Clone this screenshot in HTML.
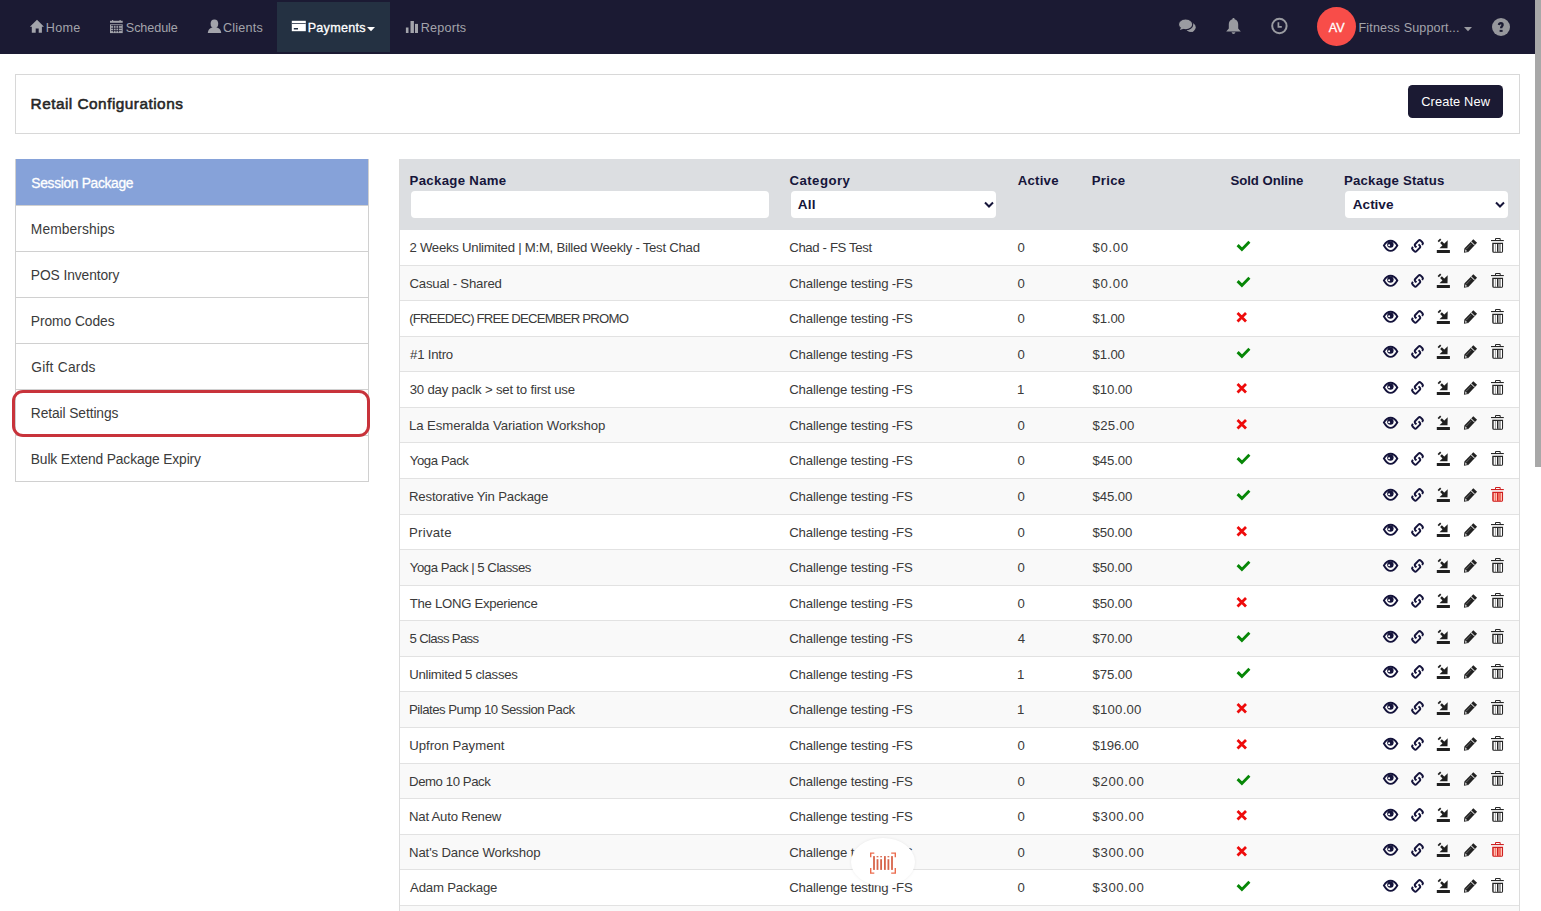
<!DOCTYPE html>
<html><head><meta charset="utf-8">
<style>
*{box-sizing:border-box;margin:0;padding:0}
html,body{width:1541px;height:911px;overflow:hidden;background:#fff;font-family:"Liberation Sans",sans-serif}
#nav{position:absolute;left:0;top:0;width:1535px;height:54px;background:#1b1a33}
#sb{position:absolute;left:1535px;top:0;width:6px;height:467px;background:#a8a8a8}
.nt{position:absolute;top:20.5px;color:#a3a4ab;font-size:12.6px;line-height:normal;white-space:nowrap}
#nav svg{position:absolute}
#act{position:absolute;left:277px;top:2px;width:113px;height:50px;background:#243142}
#hdr{position:absolute;left:15px;top:74px;width:1505px;height:60px;border:1px solid #d8d8d8}
#ttl{position:absolute;left:31px;top:95.4px;font-size:15px;font-weight:bold;color:#2b2b2b;white-space:nowrap}
#btn{position:absolute;left:1408px;top:85px;width:95px;height:33px;background:#1b1a33;border-radius:4.5px}
#btnt{position:absolute;left:1421px;top:94.4px;font-size:12.9px;color:#fff;white-space:nowrap}
#side{position:absolute;left:15px;top:159px;width:354px;border:1px solid #d0d0d0;border-top:none}
.si{height:46px;border-top:1px solid #d0d0d0;padding-left:15px;line-height:45px;font-size:13.4px;color:#3b3b3b;white-space:nowrap}
.si.on{background:#86a2d9;color:#fff;border-top-color:#86a2d9}
#ring{position:absolute;left:12px;top:390px;width:358px;height:47px;border:3px solid #c8333b;border-radius:11px}
#tbl{position:absolute;left:399px;top:159px;width:1121px;height:760px;border-left:1px solid #dcdcdc;border-right:1px solid #dcdcdc;overflow:hidden}
#th{position:absolute;left:0;top:0;width:100%;height:70.5px;background:#dcdee1}
.hl{position:absolute;top:13.5px;font-size:13.5px;font-weight:bold;color:#16153a;white-space:nowrap}
.inp{position:absolute;top:32px;height:27px;background:#fff;border-radius:4px}
.sel{font-size:14px;font-weight:bold;color:#16153a;line-height:27px;padding-left:7px}
.sel svg{position:absolute;top:10px}
.row{position:absolute;left:0;width:100%;height:35.564px;border-top:1px solid #e2e2e2;font-size:12.6px;color:#3a3a3a;white-space:nowrap}
.row.s{background:#f9f9f9}
.t{position:absolute;line-height:normal;white-space:nowrap}
.row.f{border-top-color:transparent}
.row svg{position:absolute;overflow:visible}
.row svg.ck{left:836px;top:11px}
.row svg.ac{left:980px;top:3.5px}
#fab{position:absolute;left:851px;top:838px;width:64px;height:48px;border-radius:50%;background:#fff;box-shadow:0 0 3px rgba(0,0,0,0.08)}
#fab svg{position:absolute;left:18px;top:14px}
</style></head>
<body>
<div id="nav">
  <div id="act"></div>
  <!-- home -->
  <svg style="left:29px;top:19px" width="16" height="15" viewBox="0 0 16 15"><path d="M8 0.8 L15 7.8 L12.9 7.8 L12.9 13.8 L9.7 13.8 L9.7 9.6 L6.7 9.6 L6.7 13.8 L2.8 13.8 L2.8 7.8 L0.9 7.8 Z" fill="#a3a4ab"/></svg>
  <!-- calendar -->
  <svg style="left:110px;top:20px" width="13" height="14" viewBox="0 0 13 14"><rect x="0" y="0.8" width="12.7" height="2" fill="#a3a4ab"/><rect x="2" y="0" width="1.2" height="1" fill="#a3a4ab"/><rect x="9.5" y="0" width="1.2" height="1" fill="#a3a4ab"/><rect x="0" y="4.3" width="12.7" height="8.8" fill="#a3a4ab"/><g fill="#1c1b33"><rect x="1" y="5.3" width="10.7" height="0.8"/><rect x="1" y="7.8" width="10.7" height="0.8"/><rect x="1" y="10.3" width="10.7" height="0.8"/><rect x="3" y="5.3" width="0.8" height="7"/><rect x="5.6" y="5.3" width="0.8" height="7"/><rect x="8.2" y="5.3" width="0.8" height="7"/></g></svg>
  <!-- user -->
  <svg style="left:207px;top:19px" width="15" height="15" viewBox="0 0 15 15"><ellipse cx="7.4" cy="4.8" rx="3.8" ry="4.4" fill="#a3a4ab"/><path d="M0.8 14 C1 10.5 3.5 9 5.2 8.6 L9.8 8.6 C11.5 9 14 10.5 14.2 14 Z" fill="#a3a4ab"/></svg>
  <!-- card -->
  <svg style="left:291px;top:20px" width="16" height="12" viewBox="0 0 16 12"><rect x="0.8" y="0.8" width="14" height="10.4" fill="#fff"/><rect x="0.8" y="3.1" width="14" height="0.9" fill="#3a4556"/><rect x="2.8" y="8" width="4.2" height="1.5" fill="#243142"/></svg>
  <svg style="left:366px;top:26px" width="10" height="6" viewBox="0 0 10 6"><path d="M1 1 L9 1 L5 5.2 Z" fill="#fff"/></svg>
  <!-- reports -->
  <svg style="left:405px;top:20px" width="14" height="14" viewBox="0 0 14 14"><rect x="0.9" y="7.5" width="2.6" height="5.5" fill="#a3a4ab"/><rect x="5.5" y="1" width="3.4" height="12" fill="#a3a4ab"/><rect x="10" y="3.9" width="3" height="9.1" fill="#a3a4ab"/></svg>
  <!-- chat -->
  <svg style="left:1178px;top:18px" width="19" height="16" viewBox="0 0 19 16"><ellipse cx="12.6" cy="9.3" rx="5.1" ry="4.5" fill="#9a9ba1"/><path d="M13.5 12.2 L15.8 14 L10.5 13.5 Z" fill="#9a9ba1"/><ellipse cx="7.6" cy="6.4" rx="7.1" ry="5.4" fill="#9a9ba1" stroke="#1c1b33" stroke-width="1.1"/><path d="M3 9.6 L1.9 12 L6.4 10.6 Z" fill="#9a9ba1"/></svg>
  <!-- bell -->
  <svg style="left:1225px;top:17px" width="17" height="18" viewBox="0 0 17 18"><path d="M8.5 1 C9.3 1 9.6 1.6 9.6 2.2 C12.2 2.8 13.2 5 13.2 7.5 L13.2 11.5 L15.8 14.6 L1.2 14.6 L3.8 11.5 L3.8 7.5 C3.8 5 4.8 2.8 7.4 2.2 C7.4 1.6 7.7 1 8.5 1 Z" fill="#9a9ba1"/><path d="M6.6 15.3 L10.4 15.3 C10.2 16.5 9.4 17 8.5 17 C7.6 17 6.8 16.5 6.6 15.3 Z" fill="#9a9ba1"/></svg>
  <!-- clock -->
  <svg style="left:1270px;top:17px" width="19" height="18" viewBox="0 0 19 18"><circle cx="9.4" cy="9" r="7.2" fill="none" stroke="#9a9ba1" stroke-width="2"/><path d="M8.4 5.2 V9.9 H11.8" fill="none" stroke="#9a9ba1" stroke-width="1.7"/></svg>
  <!-- avatar -->
  <div style="position:absolute;left:1317px;top:7px;width:39px;height:39px;border-radius:50%;background:#f84d49"></div>
  <svg style="left:1463px;top:26px" width="10" height="7" viewBox="0 0 10 7"><path d="M1 1 L9 1 L5 5.2 Z" fill="#9a9ba1"/></svg>
  <!-- help -->
  <svg style="left:1491px;top:17px" width="20" height="20" viewBox="0 0 20 20"><circle cx="10" cy="10" r="9" fill="#96979c"/><path d="M7.9 8.0 C8.1 6.7 8.9 6.2 9.9 6.2 C11 6.2 11.6 6.9 11.6 7.9 C11.6 9.2 10.1 9.5 10.1 11.3" fill="none" stroke="#1b1b32" stroke-width="2.3"/><rect x="8.6" y="12.9" width="3" height="2" fill="#1b1b32"/></svg>
</div>
<div id="sb"></div>
<div id="hdr"></div>
<div id="btn"></div>
<div id="side">
  <div class="si on"></div>
  <div class="si"></div>
  <div class="si"></div>
  <div class="si"></div>
  <div class="si"></div>
  <div class="si"></div>
  <div class="si"></div>
</div>
<div id="ring"></div>
<div id="tbl">
  <div id="th">
    <div class="inp" style="left:10.8px;width:358px"></div>
    <div class="inp sel" style="left:391px;width:205px"><svg style="left:192.5px" width="10" height="8" viewBox="0 0 10 8"><path d="M1 1.5 L5 5.5 L9 1.5" fill="none" stroke="#16153a" stroke-width="2"/></svg></div>
    <div class="inp sel" style="left:945px;width:163px"><svg style="left:150px" width="10" height="8" viewBox="0 0 10 8"><path d="M1 1.5 L5 5.5 L9 1.5" fill="none" stroke="#16153a" stroke-width="2"/></svg></div>
  </div>
<div class="row f" style="top:70.10px"><svg class="ck" width="16" height="14" viewBox="0 0 16 14"><path d="M1.6 4.1 L5.9 8.4 L13.4 0.8" fill="none" stroke="#078707" stroke-width="2.9"/></svg><svg class="ac" width="130" height="22" viewBox="0 0 130 22">
<path d="M3.9 11.4 C6 8.1 8 6.8 10.6 6.8 C13.2 6.8 15.2 8.1 17.3 11.4 C15.2 14.9 13.2 16.9 10.6 16.9 C8 16.9 6 14.9 3.9 11.4 Z" fill="none" stroke="#14133b" stroke-width="1.9"/>
<circle cx="10.4" cy="10.6" r="3.2" fill="#14133b"/><circle cx="9.1" cy="11.2" r="1.05" fill="#fff"/>
<g transform="translate(37.5,11.9) rotate(-45)" fill="none" stroke="#14133b" stroke-width="2.0"><path d="M-1.8 0.3 V-1.4 A1.6 1.6 0 0 1 -0.2 -3.0 H4.4 A1.6 1.6 0 0 1 6.0 -1.4 V0.9 A1.6 1.6 0 0 1 4.4 2.5 H3.9"/><path d="M1.8 -0.3 V1.4 A1.6 1.6 0 0 1 0.2 3.0 H-4.4 A1.6 1.6 0 0 1 -6.0 1.4 V-0.9 A1.6 1.6 0 0 1 -4.4 -2.5 H-3.9"/></g>
<rect x="56.8" y="16" width="13.1" height="3" fill="#1f1f1f"/>
<path d="M67.7 6.2 L67.5 14.3 L59.5 14.3 Z" fill="#1f1f1f"/><path d="M61 8.2 L64.2 11.4" stroke="#1f1f1f" stroke-width="2.5"/><path d="M58.2 7.7 L60.7 5.2" stroke="#1f1f1f" stroke-width="1.7"/>
<g transform="translate(83.8,18.8) rotate(-46)"><rect x="3.4" y="-2.6" width="13" height="5.2" fill="#222"/><path d="M0.2 0 L3.5 -2.6 L3.5 2.6 Z" fill="#222"/><path d="M2.2 0.9 L3.4 -0.6" stroke="#fff" stroke-width="1"/><rect x="12.6" y="-2.6" width="0.8" height="5.2" fill="#e8e8e8"/><path d="M5 -0.8 H11.5" stroke="#fff" stroke-width="0.6" stroke-dasharray="0.8 0.8"/></g>
<rect x="111" y="6" width="12.8" height="1.1" fill="#262626"/><path d="M115.5 6.5 V4.5 H120.2 V6.5" fill="none" stroke="#262626" stroke-width="1"/>
<path d="M112.8 9.4 H122.5 V17.2 Q122.5 18.3 121.4 18.3 H113.9 Q112.8 18.3 112.8 17.2 Z" fill="#9a9a9a" stroke="#262626" stroke-width="1.1"/>
<g fill="#ffffff"><rect x="114.1" y="10" width="1" height="7.7"/><rect x="115.9" y="10" width="1.1" height="7.7"/><rect x="120.9" y="10" width="1.1" height="7.7"/></g><rect x="117" y="10" width="1" height="7.7" fill="#262626"/>
</svg></div>
<div class="row s" style="top:105.66px"><svg class="ck" width="16" height="14" viewBox="0 0 16 14"><path d="M1.6 4.1 L5.9 8.4 L13.4 0.8" fill="none" stroke="#078707" stroke-width="2.9"/></svg><svg class="ac" width="130" height="22" viewBox="0 0 130 22">
<path d="M3.9 11.4 C6 8.1 8 6.8 10.6 6.8 C13.2 6.8 15.2 8.1 17.3 11.4 C15.2 14.9 13.2 16.9 10.6 16.9 C8 16.9 6 14.9 3.9 11.4 Z" fill="none" stroke="#14133b" stroke-width="1.9"/>
<circle cx="10.4" cy="10.6" r="3.2" fill="#14133b"/><circle cx="9.1" cy="11.2" r="1.05" fill="#fff"/>
<g transform="translate(37.5,11.9) rotate(-45)" fill="none" stroke="#14133b" stroke-width="2.0"><path d="M-1.8 0.3 V-1.4 A1.6 1.6 0 0 1 -0.2 -3.0 H4.4 A1.6 1.6 0 0 1 6.0 -1.4 V0.9 A1.6 1.6 0 0 1 4.4 2.5 H3.9"/><path d="M1.8 -0.3 V1.4 A1.6 1.6 0 0 1 0.2 3.0 H-4.4 A1.6 1.6 0 0 1 -6.0 1.4 V-0.9 A1.6 1.6 0 0 1 -4.4 -2.5 H-3.9"/></g>
<rect x="56.8" y="16" width="13.1" height="3" fill="#1f1f1f"/>
<path d="M67.7 6.2 L67.5 14.3 L59.5 14.3 Z" fill="#1f1f1f"/><path d="M61 8.2 L64.2 11.4" stroke="#1f1f1f" stroke-width="2.5"/><path d="M58.2 7.7 L60.7 5.2" stroke="#1f1f1f" stroke-width="1.7"/>
<g transform="translate(83.8,18.8) rotate(-46)"><rect x="3.4" y="-2.6" width="13" height="5.2" fill="#222"/><path d="M0.2 0 L3.5 -2.6 L3.5 2.6 Z" fill="#222"/><path d="M2.2 0.9 L3.4 -0.6" stroke="#fff" stroke-width="1"/><rect x="12.6" y="-2.6" width="0.8" height="5.2" fill="#e8e8e8"/><path d="M5 -0.8 H11.5" stroke="#fff" stroke-width="0.6" stroke-dasharray="0.8 0.8"/></g>
<rect x="111" y="6" width="12.8" height="1.1" fill="#262626"/><path d="M115.5 6.5 V4.5 H120.2 V6.5" fill="none" stroke="#262626" stroke-width="1"/>
<path d="M112.8 9.4 H122.5 V17.2 Q122.5 18.3 121.4 18.3 H113.9 Q112.8 18.3 112.8 17.2 Z" fill="#9a9a9a" stroke="#262626" stroke-width="1.1"/>
<g fill="#ffffff"><rect x="114.1" y="10" width="1" height="7.7"/><rect x="115.9" y="10" width="1.1" height="7.7"/><rect x="120.9" y="10" width="1.1" height="7.7"/></g><rect x="117" y="10" width="1" height="7.7" fill="#262626"/>
</svg></div>
<div class="row" style="top:141.23px"><svg class="ck" width="13" height="12" viewBox="0 0 13 12"><path d="M1.5 1.1 L10 9.4 M10 1.1 L1.5 9.4" fill="none" stroke="#ee0b0b" stroke-width="2.8"/></svg><svg class="ac" width="130" height="22" viewBox="0 0 130 22">
<path d="M3.9 11.4 C6 8.1 8 6.8 10.6 6.8 C13.2 6.8 15.2 8.1 17.3 11.4 C15.2 14.9 13.2 16.9 10.6 16.9 C8 16.9 6 14.9 3.9 11.4 Z" fill="none" stroke="#14133b" stroke-width="1.9"/>
<circle cx="10.4" cy="10.6" r="3.2" fill="#14133b"/><circle cx="9.1" cy="11.2" r="1.05" fill="#fff"/>
<g transform="translate(37.5,11.9) rotate(-45)" fill="none" stroke="#14133b" stroke-width="2.0"><path d="M-1.8 0.3 V-1.4 A1.6 1.6 0 0 1 -0.2 -3.0 H4.4 A1.6 1.6 0 0 1 6.0 -1.4 V0.9 A1.6 1.6 0 0 1 4.4 2.5 H3.9"/><path d="M1.8 -0.3 V1.4 A1.6 1.6 0 0 1 0.2 3.0 H-4.4 A1.6 1.6 0 0 1 -6.0 1.4 V-0.9 A1.6 1.6 0 0 1 -4.4 -2.5 H-3.9"/></g>
<rect x="56.8" y="16" width="13.1" height="3" fill="#1f1f1f"/>
<path d="M67.7 6.2 L67.5 14.3 L59.5 14.3 Z" fill="#1f1f1f"/><path d="M61 8.2 L64.2 11.4" stroke="#1f1f1f" stroke-width="2.5"/><path d="M58.2 7.7 L60.7 5.2" stroke="#1f1f1f" stroke-width="1.7"/>
<g transform="translate(83.8,18.8) rotate(-46)"><rect x="3.4" y="-2.6" width="13" height="5.2" fill="#222"/><path d="M0.2 0 L3.5 -2.6 L3.5 2.6 Z" fill="#222"/><path d="M2.2 0.9 L3.4 -0.6" stroke="#fff" stroke-width="1"/><rect x="12.6" y="-2.6" width="0.8" height="5.2" fill="#e8e8e8"/><path d="M5 -0.8 H11.5" stroke="#fff" stroke-width="0.6" stroke-dasharray="0.8 0.8"/></g>
<rect x="111" y="6" width="12.8" height="1.1" fill="#262626"/><path d="M115.5 6.5 V4.5 H120.2 V6.5" fill="none" stroke="#262626" stroke-width="1"/>
<path d="M112.8 9.4 H122.5 V17.2 Q122.5 18.3 121.4 18.3 H113.9 Q112.8 18.3 112.8 17.2 Z" fill="#9a9a9a" stroke="#262626" stroke-width="1.1"/>
<g fill="#ffffff"><rect x="114.1" y="10" width="1" height="7.7"/><rect x="115.9" y="10" width="1.1" height="7.7"/><rect x="120.9" y="10" width="1.1" height="7.7"/></g><rect x="117" y="10" width="1" height="7.7" fill="#262626"/>
</svg></div>
<div class="row s" style="top:176.79px"><svg class="ck" width="16" height="14" viewBox="0 0 16 14"><path d="M1.6 4.1 L5.9 8.4 L13.4 0.8" fill="none" stroke="#078707" stroke-width="2.9"/></svg><svg class="ac" width="130" height="22" viewBox="0 0 130 22">
<path d="M3.9 11.4 C6 8.1 8 6.8 10.6 6.8 C13.2 6.8 15.2 8.1 17.3 11.4 C15.2 14.9 13.2 16.9 10.6 16.9 C8 16.9 6 14.9 3.9 11.4 Z" fill="none" stroke="#14133b" stroke-width="1.9"/>
<circle cx="10.4" cy="10.6" r="3.2" fill="#14133b"/><circle cx="9.1" cy="11.2" r="1.05" fill="#fff"/>
<g transform="translate(37.5,11.9) rotate(-45)" fill="none" stroke="#14133b" stroke-width="2.0"><path d="M-1.8 0.3 V-1.4 A1.6 1.6 0 0 1 -0.2 -3.0 H4.4 A1.6 1.6 0 0 1 6.0 -1.4 V0.9 A1.6 1.6 0 0 1 4.4 2.5 H3.9"/><path d="M1.8 -0.3 V1.4 A1.6 1.6 0 0 1 0.2 3.0 H-4.4 A1.6 1.6 0 0 1 -6.0 1.4 V-0.9 A1.6 1.6 0 0 1 -4.4 -2.5 H-3.9"/></g>
<rect x="56.8" y="16" width="13.1" height="3" fill="#1f1f1f"/>
<path d="M67.7 6.2 L67.5 14.3 L59.5 14.3 Z" fill="#1f1f1f"/><path d="M61 8.2 L64.2 11.4" stroke="#1f1f1f" stroke-width="2.5"/><path d="M58.2 7.7 L60.7 5.2" stroke="#1f1f1f" stroke-width="1.7"/>
<g transform="translate(83.8,18.8) rotate(-46)"><rect x="3.4" y="-2.6" width="13" height="5.2" fill="#222"/><path d="M0.2 0 L3.5 -2.6 L3.5 2.6 Z" fill="#222"/><path d="M2.2 0.9 L3.4 -0.6" stroke="#fff" stroke-width="1"/><rect x="12.6" y="-2.6" width="0.8" height="5.2" fill="#e8e8e8"/><path d="M5 -0.8 H11.5" stroke="#fff" stroke-width="0.6" stroke-dasharray="0.8 0.8"/></g>
<rect x="111" y="6" width="12.8" height="1.1" fill="#262626"/><path d="M115.5 6.5 V4.5 H120.2 V6.5" fill="none" stroke="#262626" stroke-width="1"/>
<path d="M112.8 9.4 H122.5 V17.2 Q122.5 18.3 121.4 18.3 H113.9 Q112.8 18.3 112.8 17.2 Z" fill="#9a9a9a" stroke="#262626" stroke-width="1.1"/>
<g fill="#ffffff"><rect x="114.1" y="10" width="1" height="7.7"/><rect x="115.9" y="10" width="1.1" height="7.7"/><rect x="120.9" y="10" width="1.1" height="7.7"/></g><rect x="117" y="10" width="1" height="7.7" fill="#262626"/>
</svg></div>
<div class="row" style="top:212.36px"><svg class="ck" width="13" height="12" viewBox="0 0 13 12"><path d="M1.5 1.1 L10 9.4 M10 1.1 L1.5 9.4" fill="none" stroke="#ee0b0b" stroke-width="2.8"/></svg><svg class="ac" width="130" height="22" viewBox="0 0 130 22">
<path d="M3.9 11.4 C6 8.1 8 6.8 10.6 6.8 C13.2 6.8 15.2 8.1 17.3 11.4 C15.2 14.9 13.2 16.9 10.6 16.9 C8 16.9 6 14.9 3.9 11.4 Z" fill="none" stroke="#14133b" stroke-width="1.9"/>
<circle cx="10.4" cy="10.6" r="3.2" fill="#14133b"/><circle cx="9.1" cy="11.2" r="1.05" fill="#fff"/>
<g transform="translate(37.5,11.9) rotate(-45)" fill="none" stroke="#14133b" stroke-width="2.0"><path d="M-1.8 0.3 V-1.4 A1.6 1.6 0 0 1 -0.2 -3.0 H4.4 A1.6 1.6 0 0 1 6.0 -1.4 V0.9 A1.6 1.6 0 0 1 4.4 2.5 H3.9"/><path d="M1.8 -0.3 V1.4 A1.6 1.6 0 0 1 0.2 3.0 H-4.4 A1.6 1.6 0 0 1 -6.0 1.4 V-0.9 A1.6 1.6 0 0 1 -4.4 -2.5 H-3.9"/></g>
<rect x="56.8" y="16" width="13.1" height="3" fill="#1f1f1f"/>
<path d="M67.7 6.2 L67.5 14.3 L59.5 14.3 Z" fill="#1f1f1f"/><path d="M61 8.2 L64.2 11.4" stroke="#1f1f1f" stroke-width="2.5"/><path d="M58.2 7.7 L60.7 5.2" stroke="#1f1f1f" stroke-width="1.7"/>
<g transform="translate(83.8,18.8) rotate(-46)"><rect x="3.4" y="-2.6" width="13" height="5.2" fill="#222"/><path d="M0.2 0 L3.5 -2.6 L3.5 2.6 Z" fill="#222"/><path d="M2.2 0.9 L3.4 -0.6" stroke="#fff" stroke-width="1"/><rect x="12.6" y="-2.6" width="0.8" height="5.2" fill="#e8e8e8"/><path d="M5 -0.8 H11.5" stroke="#fff" stroke-width="0.6" stroke-dasharray="0.8 0.8"/></g>
<rect x="111" y="6" width="12.8" height="1.1" fill="#262626"/><path d="M115.5 6.5 V4.5 H120.2 V6.5" fill="none" stroke="#262626" stroke-width="1"/>
<path d="M112.8 9.4 H122.5 V17.2 Q122.5 18.3 121.4 18.3 H113.9 Q112.8 18.3 112.8 17.2 Z" fill="#9a9a9a" stroke="#262626" stroke-width="1.1"/>
<g fill="#ffffff"><rect x="114.1" y="10" width="1" height="7.7"/><rect x="115.9" y="10" width="1.1" height="7.7"/><rect x="120.9" y="10" width="1.1" height="7.7"/></g><rect x="117" y="10" width="1" height="7.7" fill="#262626"/>
</svg></div>
<div class="row s" style="top:247.92px"><svg class="ck" width="13" height="12" viewBox="0 0 13 12"><path d="M1.5 1.1 L10 9.4 M10 1.1 L1.5 9.4" fill="none" stroke="#ee0b0b" stroke-width="2.8"/></svg><svg class="ac" width="130" height="22" viewBox="0 0 130 22">
<path d="M3.9 11.4 C6 8.1 8 6.8 10.6 6.8 C13.2 6.8 15.2 8.1 17.3 11.4 C15.2 14.9 13.2 16.9 10.6 16.9 C8 16.9 6 14.9 3.9 11.4 Z" fill="none" stroke="#14133b" stroke-width="1.9"/>
<circle cx="10.4" cy="10.6" r="3.2" fill="#14133b"/><circle cx="9.1" cy="11.2" r="1.05" fill="#fff"/>
<g transform="translate(37.5,11.9) rotate(-45)" fill="none" stroke="#14133b" stroke-width="2.0"><path d="M-1.8 0.3 V-1.4 A1.6 1.6 0 0 1 -0.2 -3.0 H4.4 A1.6 1.6 0 0 1 6.0 -1.4 V0.9 A1.6 1.6 0 0 1 4.4 2.5 H3.9"/><path d="M1.8 -0.3 V1.4 A1.6 1.6 0 0 1 0.2 3.0 H-4.4 A1.6 1.6 0 0 1 -6.0 1.4 V-0.9 A1.6 1.6 0 0 1 -4.4 -2.5 H-3.9"/></g>
<rect x="56.8" y="16" width="13.1" height="3" fill="#1f1f1f"/>
<path d="M67.7 6.2 L67.5 14.3 L59.5 14.3 Z" fill="#1f1f1f"/><path d="M61 8.2 L64.2 11.4" stroke="#1f1f1f" stroke-width="2.5"/><path d="M58.2 7.7 L60.7 5.2" stroke="#1f1f1f" stroke-width="1.7"/>
<g transform="translate(83.8,18.8) rotate(-46)"><rect x="3.4" y="-2.6" width="13" height="5.2" fill="#222"/><path d="M0.2 0 L3.5 -2.6 L3.5 2.6 Z" fill="#222"/><path d="M2.2 0.9 L3.4 -0.6" stroke="#fff" stroke-width="1"/><rect x="12.6" y="-2.6" width="0.8" height="5.2" fill="#e8e8e8"/><path d="M5 -0.8 H11.5" stroke="#fff" stroke-width="0.6" stroke-dasharray="0.8 0.8"/></g>
<rect x="111" y="6" width="12.8" height="1.1" fill="#262626"/><path d="M115.5 6.5 V4.5 H120.2 V6.5" fill="none" stroke="#262626" stroke-width="1"/>
<path d="M112.8 9.4 H122.5 V17.2 Q122.5 18.3 121.4 18.3 H113.9 Q112.8 18.3 112.8 17.2 Z" fill="#9a9a9a" stroke="#262626" stroke-width="1.1"/>
<g fill="#ffffff"><rect x="114.1" y="10" width="1" height="7.7"/><rect x="115.9" y="10" width="1.1" height="7.7"/><rect x="120.9" y="10" width="1.1" height="7.7"/></g><rect x="117" y="10" width="1" height="7.7" fill="#262626"/>
</svg></div>
<div class="row" style="top:283.48px"><svg class="ck" width="16" height="14" viewBox="0 0 16 14"><path d="M1.6 4.1 L5.9 8.4 L13.4 0.8" fill="none" stroke="#078707" stroke-width="2.9"/></svg><svg class="ac" width="130" height="22" viewBox="0 0 130 22">
<path d="M3.9 11.4 C6 8.1 8 6.8 10.6 6.8 C13.2 6.8 15.2 8.1 17.3 11.4 C15.2 14.9 13.2 16.9 10.6 16.9 C8 16.9 6 14.9 3.9 11.4 Z" fill="none" stroke="#14133b" stroke-width="1.9"/>
<circle cx="10.4" cy="10.6" r="3.2" fill="#14133b"/><circle cx="9.1" cy="11.2" r="1.05" fill="#fff"/>
<g transform="translate(37.5,11.9) rotate(-45)" fill="none" stroke="#14133b" stroke-width="2.0"><path d="M-1.8 0.3 V-1.4 A1.6 1.6 0 0 1 -0.2 -3.0 H4.4 A1.6 1.6 0 0 1 6.0 -1.4 V0.9 A1.6 1.6 0 0 1 4.4 2.5 H3.9"/><path d="M1.8 -0.3 V1.4 A1.6 1.6 0 0 1 0.2 3.0 H-4.4 A1.6 1.6 0 0 1 -6.0 1.4 V-0.9 A1.6 1.6 0 0 1 -4.4 -2.5 H-3.9"/></g>
<rect x="56.8" y="16" width="13.1" height="3" fill="#1f1f1f"/>
<path d="M67.7 6.2 L67.5 14.3 L59.5 14.3 Z" fill="#1f1f1f"/><path d="M61 8.2 L64.2 11.4" stroke="#1f1f1f" stroke-width="2.5"/><path d="M58.2 7.7 L60.7 5.2" stroke="#1f1f1f" stroke-width="1.7"/>
<g transform="translate(83.8,18.8) rotate(-46)"><rect x="3.4" y="-2.6" width="13" height="5.2" fill="#222"/><path d="M0.2 0 L3.5 -2.6 L3.5 2.6 Z" fill="#222"/><path d="M2.2 0.9 L3.4 -0.6" stroke="#fff" stroke-width="1"/><rect x="12.6" y="-2.6" width="0.8" height="5.2" fill="#e8e8e8"/><path d="M5 -0.8 H11.5" stroke="#fff" stroke-width="0.6" stroke-dasharray="0.8 0.8"/></g>
<rect x="111" y="6" width="12.8" height="1.1" fill="#262626"/><path d="M115.5 6.5 V4.5 H120.2 V6.5" fill="none" stroke="#262626" stroke-width="1"/>
<path d="M112.8 9.4 H122.5 V17.2 Q122.5 18.3 121.4 18.3 H113.9 Q112.8 18.3 112.8 17.2 Z" fill="#9a9a9a" stroke="#262626" stroke-width="1.1"/>
<g fill="#ffffff"><rect x="114.1" y="10" width="1" height="7.7"/><rect x="115.9" y="10" width="1.1" height="7.7"/><rect x="120.9" y="10" width="1.1" height="7.7"/></g><rect x="117" y="10" width="1" height="7.7" fill="#262626"/>
</svg></div>
<div class="row s" style="top:319.05px"><svg class="ck" width="16" height="14" viewBox="0 0 16 14"><path d="M1.6 4.1 L5.9 8.4 L13.4 0.8" fill="none" stroke="#078707" stroke-width="2.9"/></svg><svg class="ac" width="130" height="22" viewBox="0 0 130 22">
<path d="M3.9 11.4 C6 8.1 8 6.8 10.6 6.8 C13.2 6.8 15.2 8.1 17.3 11.4 C15.2 14.9 13.2 16.9 10.6 16.9 C8 16.9 6 14.9 3.9 11.4 Z" fill="none" stroke="#14133b" stroke-width="1.9"/>
<circle cx="10.4" cy="10.6" r="3.2" fill="#14133b"/><circle cx="9.1" cy="11.2" r="1.05" fill="#fff"/>
<g transform="translate(37.5,11.9) rotate(-45)" fill="none" stroke="#14133b" stroke-width="2.0"><path d="M-1.8 0.3 V-1.4 A1.6 1.6 0 0 1 -0.2 -3.0 H4.4 A1.6 1.6 0 0 1 6.0 -1.4 V0.9 A1.6 1.6 0 0 1 4.4 2.5 H3.9"/><path d="M1.8 -0.3 V1.4 A1.6 1.6 0 0 1 0.2 3.0 H-4.4 A1.6 1.6 0 0 1 -6.0 1.4 V-0.9 A1.6 1.6 0 0 1 -4.4 -2.5 H-3.9"/></g>
<rect x="56.8" y="16" width="13.1" height="3" fill="#1f1f1f"/>
<path d="M67.7 6.2 L67.5 14.3 L59.5 14.3 Z" fill="#1f1f1f"/><path d="M61 8.2 L64.2 11.4" stroke="#1f1f1f" stroke-width="2.5"/><path d="M58.2 7.7 L60.7 5.2" stroke="#1f1f1f" stroke-width="1.7"/>
<g transform="translate(83.8,18.8) rotate(-46)"><rect x="3.4" y="-2.6" width="13" height="5.2" fill="#222"/><path d="M0.2 0 L3.5 -2.6 L3.5 2.6 Z" fill="#222"/><path d="M2.2 0.9 L3.4 -0.6" stroke="#fff" stroke-width="1"/><rect x="12.6" y="-2.6" width="0.8" height="5.2" fill="#e8e8e8"/><path d="M5 -0.8 H11.5" stroke="#fff" stroke-width="0.6" stroke-dasharray="0.8 0.8"/></g>
<rect x="111" y="6" width="12.8" height="1.1" fill="#cf2020"/><path d="M115.5 6.5 V4.5 H120.2 V6.5" fill="none" stroke="#cf2020" stroke-width="1"/>
<path d="M112.8 9.4 H122.5 V17.2 Q122.5 18.3 121.4 18.3 H113.9 Q112.8 18.3 112.8 17.2 Z" fill="#ef6a5c" stroke="#cf2020" stroke-width="1.1"/>
<g fill="#ffc4b8"><rect x="114.1" y="10" width="1" height="7.7"/><rect x="115.9" y="10" width="1.1" height="7.7"/><rect x="120.9" y="10" width="1.1" height="7.7"/></g><rect x="117" y="10" width="1" height="7.7" fill="#cf2020"/>
</svg></div>
<div class="row" style="top:354.61px"><svg class="ck" width="13" height="12" viewBox="0 0 13 12"><path d="M1.5 1.1 L10 9.4 M10 1.1 L1.5 9.4" fill="none" stroke="#ee0b0b" stroke-width="2.8"/></svg><svg class="ac" width="130" height="22" viewBox="0 0 130 22">
<path d="M3.9 11.4 C6 8.1 8 6.8 10.6 6.8 C13.2 6.8 15.2 8.1 17.3 11.4 C15.2 14.9 13.2 16.9 10.6 16.9 C8 16.9 6 14.9 3.9 11.4 Z" fill="none" stroke="#14133b" stroke-width="1.9"/>
<circle cx="10.4" cy="10.6" r="3.2" fill="#14133b"/><circle cx="9.1" cy="11.2" r="1.05" fill="#fff"/>
<g transform="translate(37.5,11.9) rotate(-45)" fill="none" stroke="#14133b" stroke-width="2.0"><path d="M-1.8 0.3 V-1.4 A1.6 1.6 0 0 1 -0.2 -3.0 H4.4 A1.6 1.6 0 0 1 6.0 -1.4 V0.9 A1.6 1.6 0 0 1 4.4 2.5 H3.9"/><path d="M1.8 -0.3 V1.4 A1.6 1.6 0 0 1 0.2 3.0 H-4.4 A1.6 1.6 0 0 1 -6.0 1.4 V-0.9 A1.6 1.6 0 0 1 -4.4 -2.5 H-3.9"/></g>
<rect x="56.8" y="16" width="13.1" height="3" fill="#1f1f1f"/>
<path d="M67.7 6.2 L67.5 14.3 L59.5 14.3 Z" fill="#1f1f1f"/><path d="M61 8.2 L64.2 11.4" stroke="#1f1f1f" stroke-width="2.5"/><path d="M58.2 7.7 L60.7 5.2" stroke="#1f1f1f" stroke-width="1.7"/>
<g transform="translate(83.8,18.8) rotate(-46)"><rect x="3.4" y="-2.6" width="13" height="5.2" fill="#222"/><path d="M0.2 0 L3.5 -2.6 L3.5 2.6 Z" fill="#222"/><path d="M2.2 0.9 L3.4 -0.6" stroke="#fff" stroke-width="1"/><rect x="12.6" y="-2.6" width="0.8" height="5.2" fill="#e8e8e8"/><path d="M5 -0.8 H11.5" stroke="#fff" stroke-width="0.6" stroke-dasharray="0.8 0.8"/></g>
<rect x="111" y="6" width="12.8" height="1.1" fill="#262626"/><path d="M115.5 6.5 V4.5 H120.2 V6.5" fill="none" stroke="#262626" stroke-width="1"/>
<path d="M112.8 9.4 H122.5 V17.2 Q122.5 18.3 121.4 18.3 H113.9 Q112.8 18.3 112.8 17.2 Z" fill="#9a9a9a" stroke="#262626" stroke-width="1.1"/>
<g fill="#ffffff"><rect x="114.1" y="10" width="1" height="7.7"/><rect x="115.9" y="10" width="1.1" height="7.7"/><rect x="120.9" y="10" width="1.1" height="7.7"/></g><rect x="117" y="10" width="1" height="7.7" fill="#262626"/>
</svg></div>
<div class="row s" style="top:390.18px"><svg class="ck" width="16" height="14" viewBox="0 0 16 14"><path d="M1.6 4.1 L5.9 8.4 L13.4 0.8" fill="none" stroke="#078707" stroke-width="2.9"/></svg><svg class="ac" width="130" height="22" viewBox="0 0 130 22">
<path d="M3.9 11.4 C6 8.1 8 6.8 10.6 6.8 C13.2 6.8 15.2 8.1 17.3 11.4 C15.2 14.9 13.2 16.9 10.6 16.9 C8 16.9 6 14.9 3.9 11.4 Z" fill="none" stroke="#14133b" stroke-width="1.9"/>
<circle cx="10.4" cy="10.6" r="3.2" fill="#14133b"/><circle cx="9.1" cy="11.2" r="1.05" fill="#fff"/>
<g transform="translate(37.5,11.9) rotate(-45)" fill="none" stroke="#14133b" stroke-width="2.0"><path d="M-1.8 0.3 V-1.4 A1.6 1.6 0 0 1 -0.2 -3.0 H4.4 A1.6 1.6 0 0 1 6.0 -1.4 V0.9 A1.6 1.6 0 0 1 4.4 2.5 H3.9"/><path d="M1.8 -0.3 V1.4 A1.6 1.6 0 0 1 0.2 3.0 H-4.4 A1.6 1.6 0 0 1 -6.0 1.4 V-0.9 A1.6 1.6 0 0 1 -4.4 -2.5 H-3.9"/></g>
<rect x="56.8" y="16" width="13.1" height="3" fill="#1f1f1f"/>
<path d="M67.7 6.2 L67.5 14.3 L59.5 14.3 Z" fill="#1f1f1f"/><path d="M61 8.2 L64.2 11.4" stroke="#1f1f1f" stroke-width="2.5"/><path d="M58.2 7.7 L60.7 5.2" stroke="#1f1f1f" stroke-width="1.7"/>
<g transform="translate(83.8,18.8) rotate(-46)"><rect x="3.4" y="-2.6" width="13" height="5.2" fill="#222"/><path d="M0.2 0 L3.5 -2.6 L3.5 2.6 Z" fill="#222"/><path d="M2.2 0.9 L3.4 -0.6" stroke="#fff" stroke-width="1"/><rect x="12.6" y="-2.6" width="0.8" height="5.2" fill="#e8e8e8"/><path d="M5 -0.8 H11.5" stroke="#fff" stroke-width="0.6" stroke-dasharray="0.8 0.8"/></g>
<rect x="111" y="6" width="12.8" height="1.1" fill="#262626"/><path d="M115.5 6.5 V4.5 H120.2 V6.5" fill="none" stroke="#262626" stroke-width="1"/>
<path d="M112.8 9.4 H122.5 V17.2 Q122.5 18.3 121.4 18.3 H113.9 Q112.8 18.3 112.8 17.2 Z" fill="#9a9a9a" stroke="#262626" stroke-width="1.1"/>
<g fill="#ffffff"><rect x="114.1" y="10" width="1" height="7.7"/><rect x="115.9" y="10" width="1.1" height="7.7"/><rect x="120.9" y="10" width="1.1" height="7.7"/></g><rect x="117" y="10" width="1" height="7.7" fill="#262626"/>
</svg></div>
<div class="row" style="top:425.74px"><svg class="ck" width="13" height="12" viewBox="0 0 13 12"><path d="M1.5 1.1 L10 9.4 M10 1.1 L1.5 9.4" fill="none" stroke="#ee0b0b" stroke-width="2.8"/></svg><svg class="ac" width="130" height="22" viewBox="0 0 130 22">
<path d="M3.9 11.4 C6 8.1 8 6.8 10.6 6.8 C13.2 6.8 15.2 8.1 17.3 11.4 C15.2 14.9 13.2 16.9 10.6 16.9 C8 16.9 6 14.9 3.9 11.4 Z" fill="none" stroke="#14133b" stroke-width="1.9"/>
<circle cx="10.4" cy="10.6" r="3.2" fill="#14133b"/><circle cx="9.1" cy="11.2" r="1.05" fill="#fff"/>
<g transform="translate(37.5,11.9) rotate(-45)" fill="none" stroke="#14133b" stroke-width="2.0"><path d="M-1.8 0.3 V-1.4 A1.6 1.6 0 0 1 -0.2 -3.0 H4.4 A1.6 1.6 0 0 1 6.0 -1.4 V0.9 A1.6 1.6 0 0 1 4.4 2.5 H3.9"/><path d="M1.8 -0.3 V1.4 A1.6 1.6 0 0 1 0.2 3.0 H-4.4 A1.6 1.6 0 0 1 -6.0 1.4 V-0.9 A1.6 1.6 0 0 1 -4.4 -2.5 H-3.9"/></g>
<rect x="56.8" y="16" width="13.1" height="3" fill="#1f1f1f"/>
<path d="M67.7 6.2 L67.5 14.3 L59.5 14.3 Z" fill="#1f1f1f"/><path d="M61 8.2 L64.2 11.4" stroke="#1f1f1f" stroke-width="2.5"/><path d="M58.2 7.7 L60.7 5.2" stroke="#1f1f1f" stroke-width="1.7"/>
<g transform="translate(83.8,18.8) rotate(-46)"><rect x="3.4" y="-2.6" width="13" height="5.2" fill="#222"/><path d="M0.2 0 L3.5 -2.6 L3.5 2.6 Z" fill="#222"/><path d="M2.2 0.9 L3.4 -0.6" stroke="#fff" stroke-width="1"/><rect x="12.6" y="-2.6" width="0.8" height="5.2" fill="#e8e8e8"/><path d="M5 -0.8 H11.5" stroke="#fff" stroke-width="0.6" stroke-dasharray="0.8 0.8"/></g>
<rect x="111" y="6" width="12.8" height="1.1" fill="#262626"/><path d="M115.5 6.5 V4.5 H120.2 V6.5" fill="none" stroke="#262626" stroke-width="1"/>
<path d="M112.8 9.4 H122.5 V17.2 Q122.5 18.3 121.4 18.3 H113.9 Q112.8 18.3 112.8 17.2 Z" fill="#9a9a9a" stroke="#262626" stroke-width="1.1"/>
<g fill="#ffffff"><rect x="114.1" y="10" width="1" height="7.7"/><rect x="115.9" y="10" width="1.1" height="7.7"/><rect x="120.9" y="10" width="1.1" height="7.7"/></g><rect x="117" y="10" width="1" height="7.7" fill="#262626"/>
</svg></div>
<div class="row s" style="top:461.30px"><svg class="ck" width="16" height="14" viewBox="0 0 16 14"><path d="M1.6 4.1 L5.9 8.4 L13.4 0.8" fill="none" stroke="#078707" stroke-width="2.9"/></svg><svg class="ac" width="130" height="22" viewBox="0 0 130 22">
<path d="M3.9 11.4 C6 8.1 8 6.8 10.6 6.8 C13.2 6.8 15.2 8.1 17.3 11.4 C15.2 14.9 13.2 16.9 10.6 16.9 C8 16.9 6 14.9 3.9 11.4 Z" fill="none" stroke="#14133b" stroke-width="1.9"/>
<circle cx="10.4" cy="10.6" r="3.2" fill="#14133b"/><circle cx="9.1" cy="11.2" r="1.05" fill="#fff"/>
<g transform="translate(37.5,11.9) rotate(-45)" fill="none" stroke="#14133b" stroke-width="2.0"><path d="M-1.8 0.3 V-1.4 A1.6 1.6 0 0 1 -0.2 -3.0 H4.4 A1.6 1.6 0 0 1 6.0 -1.4 V0.9 A1.6 1.6 0 0 1 4.4 2.5 H3.9"/><path d="M1.8 -0.3 V1.4 A1.6 1.6 0 0 1 0.2 3.0 H-4.4 A1.6 1.6 0 0 1 -6.0 1.4 V-0.9 A1.6 1.6 0 0 1 -4.4 -2.5 H-3.9"/></g>
<rect x="56.8" y="16" width="13.1" height="3" fill="#1f1f1f"/>
<path d="M67.7 6.2 L67.5 14.3 L59.5 14.3 Z" fill="#1f1f1f"/><path d="M61 8.2 L64.2 11.4" stroke="#1f1f1f" stroke-width="2.5"/><path d="M58.2 7.7 L60.7 5.2" stroke="#1f1f1f" stroke-width="1.7"/>
<g transform="translate(83.8,18.8) rotate(-46)"><rect x="3.4" y="-2.6" width="13" height="5.2" fill="#222"/><path d="M0.2 0 L3.5 -2.6 L3.5 2.6 Z" fill="#222"/><path d="M2.2 0.9 L3.4 -0.6" stroke="#fff" stroke-width="1"/><rect x="12.6" y="-2.6" width="0.8" height="5.2" fill="#e8e8e8"/><path d="M5 -0.8 H11.5" stroke="#fff" stroke-width="0.6" stroke-dasharray="0.8 0.8"/></g>
<rect x="111" y="6" width="12.8" height="1.1" fill="#262626"/><path d="M115.5 6.5 V4.5 H120.2 V6.5" fill="none" stroke="#262626" stroke-width="1"/>
<path d="M112.8 9.4 H122.5 V17.2 Q122.5 18.3 121.4 18.3 H113.9 Q112.8 18.3 112.8 17.2 Z" fill="#9a9a9a" stroke="#262626" stroke-width="1.1"/>
<g fill="#ffffff"><rect x="114.1" y="10" width="1" height="7.7"/><rect x="115.9" y="10" width="1.1" height="7.7"/><rect x="120.9" y="10" width="1.1" height="7.7"/></g><rect x="117" y="10" width="1" height="7.7" fill="#262626"/>
</svg></div>
<div class="row" style="top:496.87px"><svg class="ck" width="16" height="14" viewBox="0 0 16 14"><path d="M1.6 4.1 L5.9 8.4 L13.4 0.8" fill="none" stroke="#078707" stroke-width="2.9"/></svg><svg class="ac" width="130" height="22" viewBox="0 0 130 22">
<path d="M3.9 11.4 C6 8.1 8 6.8 10.6 6.8 C13.2 6.8 15.2 8.1 17.3 11.4 C15.2 14.9 13.2 16.9 10.6 16.9 C8 16.9 6 14.9 3.9 11.4 Z" fill="none" stroke="#14133b" stroke-width="1.9"/>
<circle cx="10.4" cy="10.6" r="3.2" fill="#14133b"/><circle cx="9.1" cy="11.2" r="1.05" fill="#fff"/>
<g transform="translate(37.5,11.9) rotate(-45)" fill="none" stroke="#14133b" stroke-width="2.0"><path d="M-1.8 0.3 V-1.4 A1.6 1.6 0 0 1 -0.2 -3.0 H4.4 A1.6 1.6 0 0 1 6.0 -1.4 V0.9 A1.6 1.6 0 0 1 4.4 2.5 H3.9"/><path d="M1.8 -0.3 V1.4 A1.6 1.6 0 0 1 0.2 3.0 H-4.4 A1.6 1.6 0 0 1 -6.0 1.4 V-0.9 A1.6 1.6 0 0 1 -4.4 -2.5 H-3.9"/></g>
<rect x="56.8" y="16" width="13.1" height="3" fill="#1f1f1f"/>
<path d="M67.7 6.2 L67.5 14.3 L59.5 14.3 Z" fill="#1f1f1f"/><path d="M61 8.2 L64.2 11.4" stroke="#1f1f1f" stroke-width="2.5"/><path d="M58.2 7.7 L60.7 5.2" stroke="#1f1f1f" stroke-width="1.7"/>
<g transform="translate(83.8,18.8) rotate(-46)"><rect x="3.4" y="-2.6" width="13" height="5.2" fill="#222"/><path d="M0.2 0 L3.5 -2.6 L3.5 2.6 Z" fill="#222"/><path d="M2.2 0.9 L3.4 -0.6" stroke="#fff" stroke-width="1"/><rect x="12.6" y="-2.6" width="0.8" height="5.2" fill="#e8e8e8"/><path d="M5 -0.8 H11.5" stroke="#fff" stroke-width="0.6" stroke-dasharray="0.8 0.8"/></g>
<rect x="111" y="6" width="12.8" height="1.1" fill="#262626"/><path d="M115.5 6.5 V4.5 H120.2 V6.5" fill="none" stroke="#262626" stroke-width="1"/>
<path d="M112.8 9.4 H122.5 V17.2 Q122.5 18.3 121.4 18.3 H113.9 Q112.8 18.3 112.8 17.2 Z" fill="#9a9a9a" stroke="#262626" stroke-width="1.1"/>
<g fill="#ffffff"><rect x="114.1" y="10" width="1" height="7.7"/><rect x="115.9" y="10" width="1.1" height="7.7"/><rect x="120.9" y="10" width="1.1" height="7.7"/></g><rect x="117" y="10" width="1" height="7.7" fill="#262626"/>
</svg></div>
<div class="row s" style="top:532.43px"><svg class="ck" width="13" height="12" viewBox="0 0 13 12"><path d="M1.5 1.1 L10 9.4 M10 1.1 L1.5 9.4" fill="none" stroke="#ee0b0b" stroke-width="2.8"/></svg><svg class="ac" width="130" height="22" viewBox="0 0 130 22">
<path d="M3.9 11.4 C6 8.1 8 6.8 10.6 6.8 C13.2 6.8 15.2 8.1 17.3 11.4 C15.2 14.9 13.2 16.9 10.6 16.9 C8 16.9 6 14.9 3.9 11.4 Z" fill="none" stroke="#14133b" stroke-width="1.9"/>
<circle cx="10.4" cy="10.6" r="3.2" fill="#14133b"/><circle cx="9.1" cy="11.2" r="1.05" fill="#fff"/>
<g transform="translate(37.5,11.9) rotate(-45)" fill="none" stroke="#14133b" stroke-width="2.0"><path d="M-1.8 0.3 V-1.4 A1.6 1.6 0 0 1 -0.2 -3.0 H4.4 A1.6 1.6 0 0 1 6.0 -1.4 V0.9 A1.6 1.6 0 0 1 4.4 2.5 H3.9"/><path d="M1.8 -0.3 V1.4 A1.6 1.6 0 0 1 0.2 3.0 H-4.4 A1.6 1.6 0 0 1 -6.0 1.4 V-0.9 A1.6 1.6 0 0 1 -4.4 -2.5 H-3.9"/></g>
<rect x="56.8" y="16" width="13.1" height="3" fill="#1f1f1f"/>
<path d="M67.7 6.2 L67.5 14.3 L59.5 14.3 Z" fill="#1f1f1f"/><path d="M61 8.2 L64.2 11.4" stroke="#1f1f1f" stroke-width="2.5"/><path d="M58.2 7.7 L60.7 5.2" stroke="#1f1f1f" stroke-width="1.7"/>
<g transform="translate(83.8,18.8) rotate(-46)"><rect x="3.4" y="-2.6" width="13" height="5.2" fill="#222"/><path d="M0.2 0 L3.5 -2.6 L3.5 2.6 Z" fill="#222"/><path d="M2.2 0.9 L3.4 -0.6" stroke="#fff" stroke-width="1"/><rect x="12.6" y="-2.6" width="0.8" height="5.2" fill="#e8e8e8"/><path d="M5 -0.8 H11.5" stroke="#fff" stroke-width="0.6" stroke-dasharray="0.8 0.8"/></g>
<rect x="111" y="6" width="12.8" height="1.1" fill="#262626"/><path d="M115.5 6.5 V4.5 H120.2 V6.5" fill="none" stroke="#262626" stroke-width="1"/>
<path d="M112.8 9.4 H122.5 V17.2 Q122.5 18.3 121.4 18.3 H113.9 Q112.8 18.3 112.8 17.2 Z" fill="#9a9a9a" stroke="#262626" stroke-width="1.1"/>
<g fill="#ffffff"><rect x="114.1" y="10" width="1" height="7.7"/><rect x="115.9" y="10" width="1.1" height="7.7"/><rect x="120.9" y="10" width="1.1" height="7.7"/></g><rect x="117" y="10" width="1" height="7.7" fill="#262626"/>
</svg></div>
<div class="row" style="top:568.00px"><svg class="ck" width="13" height="12" viewBox="0 0 13 12"><path d="M1.5 1.1 L10 9.4 M10 1.1 L1.5 9.4" fill="none" stroke="#ee0b0b" stroke-width="2.8"/></svg><svg class="ac" width="130" height="22" viewBox="0 0 130 22">
<path d="M3.9 11.4 C6 8.1 8 6.8 10.6 6.8 C13.2 6.8 15.2 8.1 17.3 11.4 C15.2 14.9 13.2 16.9 10.6 16.9 C8 16.9 6 14.9 3.9 11.4 Z" fill="none" stroke="#14133b" stroke-width="1.9"/>
<circle cx="10.4" cy="10.6" r="3.2" fill="#14133b"/><circle cx="9.1" cy="11.2" r="1.05" fill="#fff"/>
<g transform="translate(37.5,11.9) rotate(-45)" fill="none" stroke="#14133b" stroke-width="2.0"><path d="M-1.8 0.3 V-1.4 A1.6 1.6 0 0 1 -0.2 -3.0 H4.4 A1.6 1.6 0 0 1 6.0 -1.4 V0.9 A1.6 1.6 0 0 1 4.4 2.5 H3.9"/><path d="M1.8 -0.3 V1.4 A1.6 1.6 0 0 1 0.2 3.0 H-4.4 A1.6 1.6 0 0 1 -6.0 1.4 V-0.9 A1.6 1.6 0 0 1 -4.4 -2.5 H-3.9"/></g>
<rect x="56.8" y="16" width="13.1" height="3" fill="#1f1f1f"/>
<path d="M67.7 6.2 L67.5 14.3 L59.5 14.3 Z" fill="#1f1f1f"/><path d="M61 8.2 L64.2 11.4" stroke="#1f1f1f" stroke-width="2.5"/><path d="M58.2 7.7 L60.7 5.2" stroke="#1f1f1f" stroke-width="1.7"/>
<g transform="translate(83.8,18.8) rotate(-46)"><rect x="3.4" y="-2.6" width="13" height="5.2" fill="#222"/><path d="M0.2 0 L3.5 -2.6 L3.5 2.6 Z" fill="#222"/><path d="M2.2 0.9 L3.4 -0.6" stroke="#fff" stroke-width="1"/><rect x="12.6" y="-2.6" width="0.8" height="5.2" fill="#e8e8e8"/><path d="M5 -0.8 H11.5" stroke="#fff" stroke-width="0.6" stroke-dasharray="0.8 0.8"/></g>
<rect x="111" y="6" width="12.8" height="1.1" fill="#262626"/><path d="M115.5 6.5 V4.5 H120.2 V6.5" fill="none" stroke="#262626" stroke-width="1"/>
<path d="M112.8 9.4 H122.5 V17.2 Q122.5 18.3 121.4 18.3 H113.9 Q112.8 18.3 112.8 17.2 Z" fill="#9a9a9a" stroke="#262626" stroke-width="1.1"/>
<g fill="#ffffff"><rect x="114.1" y="10" width="1" height="7.7"/><rect x="115.9" y="10" width="1.1" height="7.7"/><rect x="120.9" y="10" width="1.1" height="7.7"/></g><rect x="117" y="10" width="1" height="7.7" fill="#262626"/>
</svg></div>
<div class="row s" style="top:603.56px"><svg class="ck" width="16" height="14" viewBox="0 0 16 14"><path d="M1.6 4.1 L5.9 8.4 L13.4 0.8" fill="none" stroke="#078707" stroke-width="2.9"/></svg><svg class="ac" width="130" height="22" viewBox="0 0 130 22">
<path d="M3.9 11.4 C6 8.1 8 6.8 10.6 6.8 C13.2 6.8 15.2 8.1 17.3 11.4 C15.2 14.9 13.2 16.9 10.6 16.9 C8 16.9 6 14.9 3.9 11.4 Z" fill="none" stroke="#14133b" stroke-width="1.9"/>
<circle cx="10.4" cy="10.6" r="3.2" fill="#14133b"/><circle cx="9.1" cy="11.2" r="1.05" fill="#fff"/>
<g transform="translate(37.5,11.9) rotate(-45)" fill="none" stroke="#14133b" stroke-width="2.0"><path d="M-1.8 0.3 V-1.4 A1.6 1.6 0 0 1 -0.2 -3.0 H4.4 A1.6 1.6 0 0 1 6.0 -1.4 V0.9 A1.6 1.6 0 0 1 4.4 2.5 H3.9"/><path d="M1.8 -0.3 V1.4 A1.6 1.6 0 0 1 0.2 3.0 H-4.4 A1.6 1.6 0 0 1 -6.0 1.4 V-0.9 A1.6 1.6 0 0 1 -4.4 -2.5 H-3.9"/></g>
<rect x="56.8" y="16" width="13.1" height="3" fill="#1f1f1f"/>
<path d="M67.7 6.2 L67.5 14.3 L59.5 14.3 Z" fill="#1f1f1f"/><path d="M61 8.2 L64.2 11.4" stroke="#1f1f1f" stroke-width="2.5"/><path d="M58.2 7.7 L60.7 5.2" stroke="#1f1f1f" stroke-width="1.7"/>
<g transform="translate(83.8,18.8) rotate(-46)"><rect x="3.4" y="-2.6" width="13" height="5.2" fill="#222"/><path d="M0.2 0 L3.5 -2.6 L3.5 2.6 Z" fill="#222"/><path d="M2.2 0.9 L3.4 -0.6" stroke="#fff" stroke-width="1"/><rect x="12.6" y="-2.6" width="0.8" height="5.2" fill="#e8e8e8"/><path d="M5 -0.8 H11.5" stroke="#fff" stroke-width="0.6" stroke-dasharray="0.8 0.8"/></g>
<rect x="111" y="6" width="12.8" height="1.1" fill="#262626"/><path d="M115.5 6.5 V4.5 H120.2 V6.5" fill="none" stroke="#262626" stroke-width="1"/>
<path d="M112.8 9.4 H122.5 V17.2 Q122.5 18.3 121.4 18.3 H113.9 Q112.8 18.3 112.8 17.2 Z" fill="#9a9a9a" stroke="#262626" stroke-width="1.1"/>
<g fill="#ffffff"><rect x="114.1" y="10" width="1" height="7.7"/><rect x="115.9" y="10" width="1.1" height="7.7"/><rect x="120.9" y="10" width="1.1" height="7.7"/></g><rect x="117" y="10" width="1" height="7.7" fill="#262626"/>
</svg></div>
<div class="row" style="top:639.12px"><svg class="ck" width="13" height="12" viewBox="0 0 13 12"><path d="M1.5 1.1 L10 9.4 M10 1.1 L1.5 9.4" fill="none" stroke="#ee0b0b" stroke-width="2.8"/></svg><svg class="ac" width="130" height="22" viewBox="0 0 130 22">
<path d="M3.9 11.4 C6 8.1 8 6.8 10.6 6.8 C13.2 6.8 15.2 8.1 17.3 11.4 C15.2 14.9 13.2 16.9 10.6 16.9 C8 16.9 6 14.9 3.9 11.4 Z" fill="none" stroke="#14133b" stroke-width="1.9"/>
<circle cx="10.4" cy="10.6" r="3.2" fill="#14133b"/><circle cx="9.1" cy="11.2" r="1.05" fill="#fff"/>
<g transform="translate(37.5,11.9) rotate(-45)" fill="none" stroke="#14133b" stroke-width="2.0"><path d="M-1.8 0.3 V-1.4 A1.6 1.6 0 0 1 -0.2 -3.0 H4.4 A1.6 1.6 0 0 1 6.0 -1.4 V0.9 A1.6 1.6 0 0 1 4.4 2.5 H3.9"/><path d="M1.8 -0.3 V1.4 A1.6 1.6 0 0 1 0.2 3.0 H-4.4 A1.6 1.6 0 0 1 -6.0 1.4 V-0.9 A1.6 1.6 0 0 1 -4.4 -2.5 H-3.9"/></g>
<rect x="56.8" y="16" width="13.1" height="3" fill="#1f1f1f"/>
<path d="M67.7 6.2 L67.5 14.3 L59.5 14.3 Z" fill="#1f1f1f"/><path d="M61 8.2 L64.2 11.4" stroke="#1f1f1f" stroke-width="2.5"/><path d="M58.2 7.7 L60.7 5.2" stroke="#1f1f1f" stroke-width="1.7"/>
<g transform="translate(83.8,18.8) rotate(-46)"><rect x="3.4" y="-2.6" width="13" height="5.2" fill="#222"/><path d="M0.2 0 L3.5 -2.6 L3.5 2.6 Z" fill="#222"/><path d="M2.2 0.9 L3.4 -0.6" stroke="#fff" stroke-width="1"/><rect x="12.6" y="-2.6" width="0.8" height="5.2" fill="#e8e8e8"/><path d="M5 -0.8 H11.5" stroke="#fff" stroke-width="0.6" stroke-dasharray="0.8 0.8"/></g>
<rect x="111" y="6" width="12.8" height="1.1" fill="#262626"/><path d="M115.5 6.5 V4.5 H120.2 V6.5" fill="none" stroke="#262626" stroke-width="1"/>
<path d="M112.8 9.4 H122.5 V17.2 Q122.5 18.3 121.4 18.3 H113.9 Q112.8 18.3 112.8 17.2 Z" fill="#9a9a9a" stroke="#262626" stroke-width="1.1"/>
<g fill="#ffffff"><rect x="114.1" y="10" width="1" height="7.7"/><rect x="115.9" y="10" width="1.1" height="7.7"/><rect x="120.9" y="10" width="1.1" height="7.7"/></g><rect x="117" y="10" width="1" height="7.7" fill="#262626"/>
</svg></div>
<div class="row s" style="top:674.69px"><svg class="ck" width="13" height="12" viewBox="0 0 13 12"><path d="M1.5 1.1 L10 9.4 M10 1.1 L1.5 9.4" fill="none" stroke="#ee0b0b" stroke-width="2.8"/></svg><svg class="ac" width="130" height="22" viewBox="0 0 130 22">
<path d="M3.9 11.4 C6 8.1 8 6.8 10.6 6.8 C13.2 6.8 15.2 8.1 17.3 11.4 C15.2 14.9 13.2 16.9 10.6 16.9 C8 16.9 6 14.9 3.9 11.4 Z" fill="none" stroke="#14133b" stroke-width="1.9"/>
<circle cx="10.4" cy="10.6" r="3.2" fill="#14133b"/><circle cx="9.1" cy="11.2" r="1.05" fill="#fff"/>
<g transform="translate(37.5,11.9) rotate(-45)" fill="none" stroke="#14133b" stroke-width="2.0"><path d="M-1.8 0.3 V-1.4 A1.6 1.6 0 0 1 -0.2 -3.0 H4.4 A1.6 1.6 0 0 1 6.0 -1.4 V0.9 A1.6 1.6 0 0 1 4.4 2.5 H3.9"/><path d="M1.8 -0.3 V1.4 A1.6 1.6 0 0 1 0.2 3.0 H-4.4 A1.6 1.6 0 0 1 -6.0 1.4 V-0.9 A1.6 1.6 0 0 1 -4.4 -2.5 H-3.9"/></g>
<rect x="56.8" y="16" width="13.1" height="3" fill="#1f1f1f"/>
<path d="M67.7 6.2 L67.5 14.3 L59.5 14.3 Z" fill="#1f1f1f"/><path d="M61 8.2 L64.2 11.4" stroke="#1f1f1f" stroke-width="2.5"/><path d="M58.2 7.7 L60.7 5.2" stroke="#1f1f1f" stroke-width="1.7"/>
<g transform="translate(83.8,18.8) rotate(-46)"><rect x="3.4" y="-2.6" width="13" height="5.2" fill="#222"/><path d="M0.2 0 L3.5 -2.6 L3.5 2.6 Z" fill="#222"/><path d="M2.2 0.9 L3.4 -0.6" stroke="#fff" stroke-width="1"/><rect x="12.6" y="-2.6" width="0.8" height="5.2" fill="#e8e8e8"/><path d="M5 -0.8 H11.5" stroke="#fff" stroke-width="0.6" stroke-dasharray="0.8 0.8"/></g>
<rect x="111" y="6" width="12.8" height="1.1" fill="#cf2020"/><path d="M115.5 6.5 V4.5 H120.2 V6.5" fill="none" stroke="#cf2020" stroke-width="1"/>
<path d="M112.8 9.4 H122.5 V17.2 Q122.5 18.3 121.4 18.3 H113.9 Q112.8 18.3 112.8 17.2 Z" fill="#ef6a5c" stroke="#cf2020" stroke-width="1.1"/>
<g fill="#ffc4b8"><rect x="114.1" y="10" width="1" height="7.7"/><rect x="115.9" y="10" width="1.1" height="7.7"/><rect x="120.9" y="10" width="1.1" height="7.7"/></g><rect x="117" y="10" width="1" height="7.7" fill="#cf2020"/>
</svg></div>
<div class="row" style="top:710.25px"><svg class="ck" width="16" height="14" viewBox="0 0 16 14"><path d="M1.6 4.1 L5.9 8.4 L13.4 0.8" fill="none" stroke="#078707" stroke-width="2.9"/></svg><svg class="ac" width="130" height="22" viewBox="0 0 130 22">
<path d="M3.9 11.4 C6 8.1 8 6.8 10.6 6.8 C13.2 6.8 15.2 8.1 17.3 11.4 C15.2 14.9 13.2 16.9 10.6 16.9 C8 16.9 6 14.9 3.9 11.4 Z" fill="none" stroke="#14133b" stroke-width="1.9"/>
<circle cx="10.4" cy="10.6" r="3.2" fill="#14133b"/><circle cx="9.1" cy="11.2" r="1.05" fill="#fff"/>
<g transform="translate(37.5,11.9) rotate(-45)" fill="none" stroke="#14133b" stroke-width="2.0"><path d="M-1.8 0.3 V-1.4 A1.6 1.6 0 0 1 -0.2 -3.0 H4.4 A1.6 1.6 0 0 1 6.0 -1.4 V0.9 A1.6 1.6 0 0 1 4.4 2.5 H3.9"/><path d="M1.8 -0.3 V1.4 A1.6 1.6 0 0 1 0.2 3.0 H-4.4 A1.6 1.6 0 0 1 -6.0 1.4 V-0.9 A1.6 1.6 0 0 1 -4.4 -2.5 H-3.9"/></g>
<rect x="56.8" y="16" width="13.1" height="3" fill="#1f1f1f"/>
<path d="M67.7 6.2 L67.5 14.3 L59.5 14.3 Z" fill="#1f1f1f"/><path d="M61 8.2 L64.2 11.4" stroke="#1f1f1f" stroke-width="2.5"/><path d="M58.2 7.7 L60.7 5.2" stroke="#1f1f1f" stroke-width="1.7"/>
<g transform="translate(83.8,18.8) rotate(-46)"><rect x="3.4" y="-2.6" width="13" height="5.2" fill="#222"/><path d="M0.2 0 L3.5 -2.6 L3.5 2.6 Z" fill="#222"/><path d="M2.2 0.9 L3.4 -0.6" stroke="#fff" stroke-width="1"/><rect x="12.6" y="-2.6" width="0.8" height="5.2" fill="#e8e8e8"/><path d="M5 -0.8 H11.5" stroke="#fff" stroke-width="0.6" stroke-dasharray="0.8 0.8"/></g>
<rect x="111" y="6" width="12.8" height="1.1" fill="#262626"/><path d="M115.5 6.5 V4.5 H120.2 V6.5" fill="none" stroke="#262626" stroke-width="1"/>
<path d="M112.8 9.4 H122.5 V17.2 Q122.5 18.3 121.4 18.3 H113.9 Q112.8 18.3 112.8 17.2 Z" fill="#9a9a9a" stroke="#262626" stroke-width="1.1"/>
<g fill="#ffffff"><rect x="114.1" y="10" width="1" height="7.7"/><rect x="115.9" y="10" width="1.1" height="7.7"/><rect x="120.9" y="10" width="1.1" height="7.7"/></g><rect x="117" y="10" width="1" height="7.7" fill="#262626"/>
</svg></div>
<div class="row s" style="top:745.82px"></div>
</div>
<span class="t" style="left:45.79px;top:20.50px;font-size:12.6px;letter-spacing:0.318px;color:#a3a4ab">Home</span>
<span class="t" style="left:125.80px;top:20.50px;font-size:12.6px;letter-spacing:-0.069px;color:#a3a4ab">Schedule</span>
<span class="t" style="left:222.97px;top:20.50px;font-size:12.6px;letter-spacing:0.216px;color:#a3a4ab">Clients</span>
<span class="t" style="left:420.69px;top:20.50px;font-size:12.6px;letter-spacing:0.228px;color:#a3a4ab">Reports</span>
<span class="t" style="left:307.69px;top:20.50px;font-size:12.6px;letter-spacing:0.266px;color:#ffffff;-webkit-text-stroke:0.3px #ffffff">Payments</span>
<span class="t" style="left:1328.70px;top:20.60px;font-size:12.6px;letter-spacing:0.189px;color:#ffffff;-webkit-text-stroke:0.3px #ffffff">AV</span>
<span class="t" style="left:1358.49px;top:20.80px;font-size:12.6px;letter-spacing:0.134px;color:#a3a4ab">Fitness Support...</span>
<span class="t" style="left:30.57px;top:95.06px;font-size:15.4px;letter-spacing:0.472px;color:#262626;-webkit-text-stroke:0.55px #262626">Retail Configurations</span>
<span class="t" style="left:1421.16px;top:93.82px;font-size:12.8px;letter-spacing:0.129px;color:#ffffff">Create New</span>
<span class="t" style="left:31.35px;top:175.91px;font-size:13.8px;letter-spacing:-0.320px;color:#ffffff;-webkit-text-stroke:0.3px #ffffff">Session Package</span>
<span class="t" style="left:30.80px;top:221.91px;font-size:13.8px;letter-spacing:0.099px;color:#3b3b3b">Memberships</span>
<span class="t" style="left:30.80px;top:267.91px;font-size:13.8px;letter-spacing:-0.086px;color:#3b3b3b">POS Inventory</span>
<span class="t" style="left:30.80px;top:313.91px;font-size:13.8px;letter-spacing:-0.055px;color:#3b3b3b">Promo Codes</span>
<span class="t" style="left:31.21px;top:359.91px;font-size:13.8px;letter-spacing:0.243px;color:#3b3b3b">Gift Cards</span>
<span class="t" style="left:30.80px;top:405.91px;font-size:13.8px;letter-spacing:-0.097px;color:#3b3b3b">Retail Settings</span>
<span class="t" style="left:30.80px;top:451.91px;font-size:13.8px;letter-spacing:-0.126px;color:#3b3b3b">Bulk Extend Package Expiry</span>
<span class="t" style="left:409.61px;top:172.85px;font-size:13.2px;letter-spacing:0.313px;color:#16153a;font-weight:bold">Package Name</span>
<span class="t" style="left:789.47px;top:172.85px;font-size:13.2px;letter-spacing:0.466px;color:#16153a;font-weight:bold">Category</span>
<span class="t" style="left:1017.64px;top:172.85px;font-size:13.2px;letter-spacing:0.258px;color:#16153a;font-weight:bold">Active</span>
<span class="t" style="left:1091.71px;top:172.85px;font-size:13.2px;letter-spacing:0.287px;color:#16153a;font-weight:bold">Price</span>
<span class="t" style="left:1230.44px;top:172.85px;font-size:13.2px;letter-spacing:-0.043px;color:#16153a;font-weight:bold">Sold Online</span>
<span class="t" style="left:1344.01px;top:172.85px;font-size:13.2px;letter-spacing:0.214px;color:#16153a;font-weight:bold">Package Status</span>
<span class="t" style="left:797.83px;top:196.59px;font-size:13.6px;letter-spacing:0.158px;color:#16153a;font-weight:bold">All</span>
<span class="t" style="left:1352.83px;top:196.59px;font-size:13.6px;letter-spacing:-0.038px;color:#16153a;font-weight:bold">Active</span>
<span class="t" style="left:409.44px;top:240.05px;font-size:13.2px;letter-spacing:-0.257px;color:#3a3a3a">2 Weeks Unlimited | M:M, Billed Weekly - Test Chad</span>
<span class="t" style="left:789.24px;top:240.05px;font-size:13.2px;letter-spacing:-0.369px;color:#3a3a3a">Chad - FS Test</span>
<span class="t" style="left:1017.60px;top:240.05px;font-size:13.2px;letter-spacing:0.000px;color:#3a3a3a">0</span>
<span class="t" style="left:1092.57px;top:240.05px;font-size:13.2px;letter-spacing:0.644px;color:#3a3a3a">$0.00</span>
<span class="t" style="left:409.44px;top:275.62px;font-size:13.2px;letter-spacing:-0.206px;color:#3a3a3a">Casual - Shared</span>
<span class="t" style="left:789.24px;top:275.62px;font-size:13.2px;letter-spacing:-0.164px;color:#3a3a3a">Challenge testing -FS</span>
<span class="t" style="left:1017.60px;top:275.62px;font-size:13.2px;letter-spacing:0.000px;color:#3a3a3a">0</span>
<span class="t" style="left:1092.57px;top:275.62px;font-size:13.2px;letter-spacing:0.644px;color:#3a3a3a">$0.00</span>
<span class="t" style="left:409.31px;top:311.18px;font-size:13.2px;letter-spacing:-0.819px;color:#3a3a3a">(FREEDEC) FREE DECEMBER PROMO</span>
<span class="t" style="left:789.24px;top:311.18px;font-size:13.2px;letter-spacing:-0.164px;color:#3a3a3a">Challenge testing -FS</span>
<span class="t" style="left:1017.60px;top:311.18px;font-size:13.2px;letter-spacing:0.000px;color:#3a3a3a">0</span>
<span class="t" style="left:1092.57px;top:311.18px;font-size:13.2px;letter-spacing:-0.156px;color:#3a3a3a">$1.00</span>
<span class="t" style="left:410.10px;top:346.75px;font-size:13.2px;letter-spacing:-0.241px;color:#3a3a3a">#1 Intro</span>
<span class="t" style="left:789.24px;top:346.75px;font-size:13.2px;letter-spacing:-0.164px;color:#3a3a3a">Challenge testing -FS</span>
<span class="t" style="left:1017.60px;top:346.75px;font-size:13.2px;letter-spacing:0.000px;color:#3a3a3a">0</span>
<span class="t" style="left:1092.57px;top:346.75px;font-size:13.2px;letter-spacing:-0.156px;color:#3a3a3a">$1.00</span>
<span class="t" style="left:409.70px;top:382.31px;font-size:13.2px;letter-spacing:-0.192px;color:#3a3a3a">30 day paclk &gt; set to first use</span>
<span class="t" style="left:789.24px;top:382.31px;font-size:13.2px;letter-spacing:-0.164px;color:#3a3a3a">Challenge testing -FS</span>
<span class="t" style="left:1017.08px;top:382.31px;font-size:13.2px;letter-spacing:0.000px;color:#3a3a3a">1</span>
<span class="t" style="left:1092.57px;top:382.31px;font-size:13.2px;letter-spacing:-0.093px;color:#3a3a3a">$10.00</span>
<span class="t" style="left:409.04px;top:417.87px;font-size:13.2px;letter-spacing:-0.088px;color:#3a3a3a">La Esmeralda Variation Workshop</span>
<span class="t" style="left:789.24px;top:417.87px;font-size:13.2px;letter-spacing:-0.164px;color:#3a3a3a">Challenge testing -FS</span>
<span class="t" style="left:1017.60px;top:417.87px;font-size:13.2px;letter-spacing:0.000px;color:#3a3a3a">0</span>
<span class="t" style="left:1092.57px;top:417.87px;font-size:13.2px;letter-spacing:0.307px;color:#3a3a3a">$25.00</span>
<span class="t" style="left:409.84px;top:453.44px;font-size:13.2px;letter-spacing:-0.437px;color:#3a3a3a">Yoga Pack</span>
<span class="t" style="left:789.24px;top:453.44px;font-size:13.2px;letter-spacing:-0.164px;color:#3a3a3a">Challenge testing -FS</span>
<span class="t" style="left:1017.60px;top:453.44px;font-size:13.2px;letter-spacing:0.000px;color:#3a3a3a">0</span>
<span class="t" style="left:1092.57px;top:453.44px;font-size:13.2px;letter-spacing:-0.104px;color:#3a3a3a">$45.00</span>
<span class="t" style="left:409.04px;top:489.00px;font-size:13.2px;letter-spacing:-0.201px;color:#3a3a3a">Restorative Yin Package</span>
<span class="t" style="left:789.24px;top:489.00px;font-size:13.2px;letter-spacing:-0.164px;color:#3a3a3a">Challenge testing -FS</span>
<span class="t" style="left:1017.60px;top:489.00px;font-size:13.2px;letter-spacing:0.000px;color:#3a3a3a">0</span>
<span class="t" style="left:1092.57px;top:489.00px;font-size:13.2px;letter-spacing:-0.104px;color:#3a3a3a">$45.00</span>
<span class="t" style="left:409.04px;top:524.57px;font-size:13.2px;letter-spacing:0.258px;color:#3a3a3a">Private</span>
<span class="t" style="left:789.24px;top:524.57px;font-size:13.2px;letter-spacing:-0.164px;color:#3a3a3a">Challenge testing -FS</span>
<span class="t" style="left:1017.60px;top:524.57px;font-size:13.2px;letter-spacing:0.000px;color:#3a3a3a">0</span>
<span class="t" style="left:1092.57px;top:524.57px;font-size:13.2px;letter-spacing:-0.104px;color:#3a3a3a">$50.00</span>
<span class="t" style="left:409.84px;top:560.13px;font-size:13.2px;letter-spacing:-0.484px;color:#3a3a3a">Yoga Pack | 5 Classes</span>
<span class="t" style="left:789.24px;top:560.13px;font-size:13.2px;letter-spacing:-0.164px;color:#3a3a3a">Challenge testing -FS</span>
<span class="t" style="left:1017.60px;top:560.13px;font-size:13.2px;letter-spacing:0.000px;color:#3a3a3a">0</span>
<span class="t" style="left:1092.57px;top:560.13px;font-size:13.2px;letter-spacing:-0.104px;color:#3a3a3a">$50.00</span>
<span class="t" style="left:409.84px;top:595.69px;font-size:13.2px;letter-spacing:-0.305px;color:#3a3a3a">The LONG Experience</span>
<span class="t" style="left:789.24px;top:595.69px;font-size:13.2px;letter-spacing:-0.164px;color:#3a3a3a">Challenge testing -FS</span>
<span class="t" style="left:1017.60px;top:595.69px;font-size:13.2px;letter-spacing:0.000px;color:#3a3a3a">0</span>
<span class="t" style="left:1092.57px;top:595.69px;font-size:13.2px;letter-spacing:-0.104px;color:#3a3a3a">$50.00</span>
<span class="t" style="left:409.57px;top:631.26px;font-size:13.2px;letter-spacing:-0.673px;color:#3a3a3a">5 Class Pass</span>
<span class="t" style="left:789.24px;top:631.26px;font-size:13.2px;letter-spacing:-0.164px;color:#3a3a3a">Challenge testing -FS</span>
<span class="t" style="left:1017.74px;top:631.26px;font-size:13.2px;letter-spacing:0.000px;color:#3a3a3a">4</span>
<span class="t" style="left:1092.57px;top:631.26px;font-size:13.2px;letter-spacing:-0.104px;color:#3a3a3a">$70.00</span>
<span class="t" style="left:409.18px;top:666.82px;font-size:13.2px;letter-spacing:-0.272px;color:#3a3a3a">Unlimited 5 classes</span>
<span class="t" style="left:789.24px;top:666.82px;font-size:13.2px;letter-spacing:-0.164px;color:#3a3a3a">Challenge testing -FS</span>
<span class="t" style="left:1017.08px;top:666.82px;font-size:13.2px;letter-spacing:0.000px;color:#3a3a3a">1</span>
<span class="t" style="left:1092.57px;top:666.82px;font-size:13.2px;letter-spacing:-0.104px;color:#3a3a3a">$75.00</span>
<span class="t" style="left:409.04px;top:702.39px;font-size:13.2px;letter-spacing:-0.501px;color:#3a3a3a">Pilates Pump 10 Session Pack</span>
<span class="t" style="left:789.24px;top:702.39px;font-size:13.2px;letter-spacing:-0.164px;color:#3a3a3a">Challenge testing -FS</span>
<span class="t" style="left:1017.08px;top:702.39px;font-size:13.2px;letter-spacing:0.000px;color:#3a3a3a">1</span>
<span class="t" style="left:1092.57px;top:702.39px;font-size:13.2px;letter-spacing:0.182px;color:#3a3a3a">$100.00</span>
<span class="t" style="left:409.18px;top:737.95px;font-size:13.2px;letter-spacing:0.001px;color:#3a3a3a">Upfron Payment</span>
<span class="t" style="left:789.24px;top:737.95px;font-size:13.2px;letter-spacing:-0.164px;color:#3a3a3a">Challenge testing -FS</span>
<span class="t" style="left:1017.60px;top:737.95px;font-size:13.2px;letter-spacing:0.000px;color:#3a3a3a">0</span>
<span class="t" style="left:1092.57px;top:737.95px;font-size:13.2px;letter-spacing:-0.218px;color:#3a3a3a">$196.00</span>
<span class="t" style="left:409.04px;top:773.51px;font-size:13.2px;letter-spacing:-0.423px;color:#3a3a3a">Demo 10 Pack</span>
<span class="t" style="left:789.24px;top:773.51px;font-size:13.2px;letter-spacing:-0.164px;color:#3a3a3a">Challenge testing -FS</span>
<span class="t" style="left:1017.60px;top:773.51px;font-size:13.2px;letter-spacing:0.000px;color:#3a3a3a">0</span>
<span class="t" style="left:1092.57px;top:773.51px;font-size:13.2px;letter-spacing:0.582px;color:#3a3a3a">$200.00</span>
<span class="t" style="left:409.04px;top:809.08px;font-size:13.2px;letter-spacing:-0.236px;color:#3a3a3a">Nat Auto Renew</span>
<span class="t" style="left:789.24px;top:809.08px;font-size:13.2px;letter-spacing:-0.164px;color:#3a3a3a">Challenge testing -FS</span>
<span class="t" style="left:1017.60px;top:809.08px;font-size:13.2px;letter-spacing:0.000px;color:#3a3a3a">0</span>
<span class="t" style="left:1092.57px;top:809.08px;font-size:13.2px;letter-spacing:0.599px;color:#3a3a3a">$300.00</span>
<span class="t" style="left:409.04px;top:844.64px;font-size:13.2px;letter-spacing:-0.142px;color:#3a3a3a">Nat&#x27;s Dance Workshop</span>
<span class="t" style="left:789.24px;top:844.64px;font-size:13.2px;letter-spacing:-0.164px;color:#3a3a3a">Challenge testing -FS</span>
<span class="t" style="left:1017.60px;top:844.64px;font-size:13.2px;letter-spacing:0.000px;color:#3a3a3a">0</span>
<span class="t" style="left:1092.57px;top:844.64px;font-size:13.2px;letter-spacing:0.599px;color:#3a3a3a">$300.00</span>
<span class="t" style="left:410.10px;top:880.21px;font-size:13.2px;letter-spacing:-0.195px;color:#3a3a3a">Adam Package</span>
<span class="t" style="left:789.24px;top:880.21px;font-size:13.2px;letter-spacing:-0.164px;color:#3a3a3a">Challenge testing -FS</span>
<span class="t" style="left:1017.60px;top:880.21px;font-size:13.2px;letter-spacing:0.000px;color:#3a3a3a">0</span>
<span class="t" style="left:1092.57px;top:880.21px;font-size:13.2px;letter-spacing:0.599px;color:#3a3a3a">$300.00</span>
<div id="fab"><svg width="28" height="23" viewBox="0 0 28 23"><g fill="none" stroke="#ec6c4e" stroke-width="1.4"><path d="M5.3 1.1 H1.7 V5.3"/><path d="M22.2 1.1 H26.3 V5.3"/><path d="M1.7 16 V21.1 H5.3"/><path d="M26.3 16 V21.1 H22.2"/></g><g fill="#d7654b"><rect x="4.1" y="4.1" width="1.8" height="13.8"/><rect x="15" y="4.1" width="1.8" height="13.8"/><rect x="22.1" y="4.1" width="1.8" height="13.8"/><rect x="7.6" y="4.1" width="1.8" height="1.2"/><rect x="7.6" y="7.2" width="1.8" height="10.7"/><rect x="11.2" y="4.1" width="1.8" height="1.2"/><rect x="11.2" y="7.2" width="1.8" height="10.7"/><rect x="18.5" y="4.1" width="1.8" height="1.2"/><rect x="18.5" y="7.2" width="1.8" height="10.7"/></g></svg></div>
</body></html>
